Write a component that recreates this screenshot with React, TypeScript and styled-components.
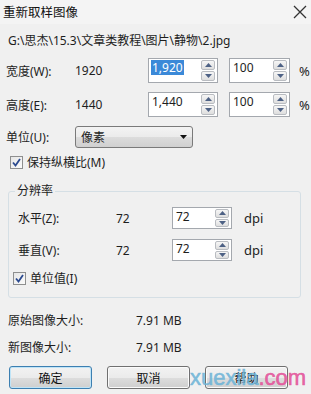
import React from 'react'
import styled, { createGlobalStyle } from 'styled-components'

const GlobalStyle = createGlobalStyle`
  html, body {
    margin: 0;
    padding: 0;
    background: #f0f0f0;
  }
  body {
    font-family: "Noto Sans", "Noto Sans CJK SC", sans-serif;
    font-size: 12px;
    color: #1e1e1e;
  }
`

const Spin: React.FC<{ value: string; selected?: boolean; width: number }> = ({
  value,
  selected,
  width
}) => (
  <SpinBox $width={width}>
    <SpinText $selected={selected}>{value}</SpinText>
    <SpinButtons>
      <SpinButton>
        <svg width="7" height="4" viewBox="0 0 7 4">
          <path d="M0 4 L3.5 0 L7 4 Z" fill="#4d6185" />
        </svg>
      </SpinButton>
      <SpinButton>
        <svg width="7" height="4" viewBox="0 0 7 4">
          <path d="M0 0 L7 0 L3.5 4 Z" fill="#4d6185" />
        </svg>
      </SpinButton>
    </SpinButtons>
  </SpinBox>
)

const Check: React.FC = () => (
  <CheckBox>
    <svg width="9" height="9" viewBox="0 0 9 9">
      <path d="M1 4.5 L3.5 7.5 L8 1" stroke="#2b4a8f" strokeWidth="1.8" fill="none" />
    </svg>
  </CheckBox>
)

const App: React.FC = () => {
  return (
    <>
      <GlobalStyle />
      <Window>
        <TitleBar>
          <Title>重新取样图像</Title>
          <Close>
            <svg width="14" height="14" viewBox="0 0 14 14">
              <path d="M1 1 L13 13 M13 1 L1 13" stroke="#333" strokeWidth="1.3" />
            </svg>
          </Close>
        </TitleBar>

        <PathLine>G:\思杰\15.3\文章类教程\图片\静物\2.jpg</PathLine>

        <SizeRow $top={9}>
          <Label>宽度(W):</Label>
          <Value>1920</Value>
          <Spin value="1,920" selected width={70} />
          <Spin value="100" width={61} />
          <Unit>%</Unit>
        </SizeRow>
        <SizeRow $top={9}>
          <Label>高度(E):</Label>
          <Value>1440</Value>
          <Spin value="1,440" width={70} />
          <Spin value="100" width={61} />
          <Unit>%</Unit>
        </SizeRow>

        <UnitRow>
          <Label>单位(U):</Label>
          <Select>
            <span>像素</span>
            <svg width="7" height="4" viewBox="0 0 7 4">
              <path d="M0 0 L7 0 L3.5 4 Z" fill="#111" />
            </svg>
          </Select>
        </UnitRow>

        <CheckRow $left={10} $top={6}>
          <Check />
          <span>保持纵横比(M)</span>
        </CheckRow>

        <Group>
          <Legend>分辨率</Legend>
          <ResRow $top={9}>
            <Label>水平(Z):</Label>
            <Value>72</Value>
            <Spin value="72" width={60} />
            <Unit>dpi</Unit>
          </ResRow>
          <ResRow $top={10}>
            <Label>垂直(V):</Label>
            <Value>72</Value>
            <Spin value="72" width={60} />
            <Unit>dpi</Unit>
          </ResRow>
          <CheckRow $left={3} $top={9}>
            <Check />
            <span>单位值(I)</span>
          </CheckRow>
        </Group>

        <InfoRow $top={13}>
          <InfoLabel>原始图像大小:</InfoLabel>
          <span>7.91 MB</span>
        </InfoRow>
        <InfoRow $top={9}>
          <InfoLabel>新图像大小:</InfoLabel>
          <span>7.91 MB</span>
        </InfoRow>

        <ButtonBar>
          <DialogButton $primary>确定</DialogButton>
          <DialogButton>取消</DialogButton>
          <DialogButton>帮助</DialogButton>
          <Watermark>
            <Blue>xuexila</Blue>
            <Pink>.com</Pink>
          </Watermark>
        </ButtonBar>
      </Window>
    </>
  )
}

export default App

const Window = styled.div`
  position: relative;
  width: 311px;
  height: 394px;
  background: #f0f0f0;
  overflow: hidden;
`

const TitleBar = styled.div`
  height: 24px;
  display: flex;
  align-items: center;
  justify-content: space-between;
  padding: 0 4px 0 3px;
  background: #f4f4f4;
`

const Title = styled.div`
  font-size: 12.5px;
  color: #111;
  margin-top: -2px;
`

const Close = styled.div`
  display: flex;
  align-items: center;
`

const PathLine = styled.div`
  margin: 9px 0 0 8px;
  height: 16px;
  line-height: 16px;
  font-size: 12px;
`

const SizeRow = styled.div<{ $top: number }>`
  display: grid;
  grid-template-columns: 69px 73px 70px 61px auto;
  align-items: center;
  height: 25px;
  margin: ${p => p.$top}px 0 0 6px;

  & > :nth-child(4) {
    margin-left: 11px;
  }
  & > :nth-child(5) {
    margin-left: 20px;
  }
`

const ResRow = styled.div<{ $top: number }>`
  display: grid;
  grid-template-columns: 98px 56px 60px auto;
  align-items: center;
  height: 22px;
  margin: ${p => p.$top}px 0 0 8px;

  & > :nth-child(4) {
    margin-left: 12px;
  }
`

const Label = styled.span`
  font-size: 12px;
`

const Value = styled.span`
  font-size: 12px;
`

const Unit = styled.span`
  font-size: 13px;
`

const SpinBox = styled.div<{ $width: number }>`
  box-sizing: border-box;
  width: ${p => p.$width}px;
  height: 100%;
  background: #fff;
  border: 1px solid #a4a8ae;
  display: flex;
  justify-content: space-between;
  padding: 1px 2px;
`

const SpinText = styled.span<{ $selected?: boolean }>`
  align-self: flex-start;
  font-size: 12px;
  line-height: 15px;
  height: 15px;
  padding: 0 1px;
  background: ${p => (p.$selected ? '#3b89d8' : 'transparent')};
  color: ${p => (p.$selected ? '#fff' : '#1e1e1e')};
`

const SpinButtons = styled.div`
  width: 14px;
  display: flex;
  flex-direction: column;
  gap: 1px;
`

const SpinButton = styled.div`
  flex: 1;
  box-sizing: border-box;
  border: 1px solid #b9bcc1;
  border-radius: 2px;
  background: linear-gradient(#f6f6f6, #dedede);
  display: flex;
  align-items: center;
  justify-content: center;
`

const UnitRow = styled.div`
  display: grid;
  grid-template-columns: 69px 118px;
  align-items: center;
  height: 22px;
  margin: 9px 0 0 6px;
`

const Select = styled.div`
  box-sizing: border-box;
  height: 22px;
  border: 1px solid #7a7a7a;
  border-radius: 3px;
  background: linear-gradient(#f3f3f3 0%, #ebebeb 50%, #dcdcdc 51%, #d0d0d0 100%);
  display: flex;
  align-items: center;
  justify-content: space-between;
  padding: 0 5px;
  font-size: 12px;
`

const CheckRow = styled.div<{ $left: number; $top: number }>`
  display: flex;
  align-items: center;
  gap: 4px;
  height: 16px;
  margin: ${p => p.$top}px 0 0 ${p => p.$left}px;
  font-size: 12px;
`

const CheckBox = styled.div`
  box-sizing: border-box;
  width: 13px;
  height: 13px;
  border: 1px solid #8e8f8f;
  background: linear-gradient(135deg, #e6e6e6, #fbfbfb);
  display: flex;
  align-items: center;
  justify-content: center;
`

const Group = styled.fieldset`
  box-sizing: border-box;
  width: 293px;
  height: 114px;
  margin: 14px 0 0 8px;
  padding: 0 0 0 1px;
  border: 1px solid #d5dfe5;
  border-radius: 3px;
`

const Legend = styled.legend`
  padding: 0 2px;
  margin-left: 5px;
  font-size: 12px;
  line-height: 14px;
`

const InfoRow = styled.div<{ $top: number }>`
  display: grid;
  grid-template-columns: 128px auto;
  align-items: center;
  height: 18px;
  margin: ${p => p.$top}px 0 0 8px;
  font-size: 12px;
`

const InfoLabel = styled.span``

const ButtonBar = styled.div`
  position: relative;
  display: flex;
  gap: 15px;
  margin: 10px 0 0 9px;
`

const DialogButton = styled.button<{ $primary?: boolean }>`
  width: 83px;
  height: 23px;
  padding: 0;
  border: 1px solid ${p => (p.$primary ? '#3c7fb1' : '#707070')};
  border-radius: 3px;
  background: linear-gradient(#f2f2f2 0%, #ebebeb 50%, #dddddd 51%, #cfcfcf 100%);
  box-shadow: ${p => (p.$primary ? 'inset 0 0 0 1px #bfe4f7' : 'inset 0 0 0 1px #fbfbfb')};
  font-family: "Noto Sans CJK SC", sans-serif;
  font-size: 12px;
  color: #111;
`

const Watermark = styled.div`
  position: absolute;
  left: 181px;
  top: -1px;
  font-family: "Liberation Sans", Arial, sans-serif;
  font-size: 22px;
  line-height: 25px;
  pointer-events: none;
  -webkit-text-stroke: 0.6px currentColor;
`

const Blue = styled.span`
  color: rgba(110, 180, 215, 0.85);
`

const Pink = styled.span`
  color: rgba(228, 85, 155, 0.9);
`
